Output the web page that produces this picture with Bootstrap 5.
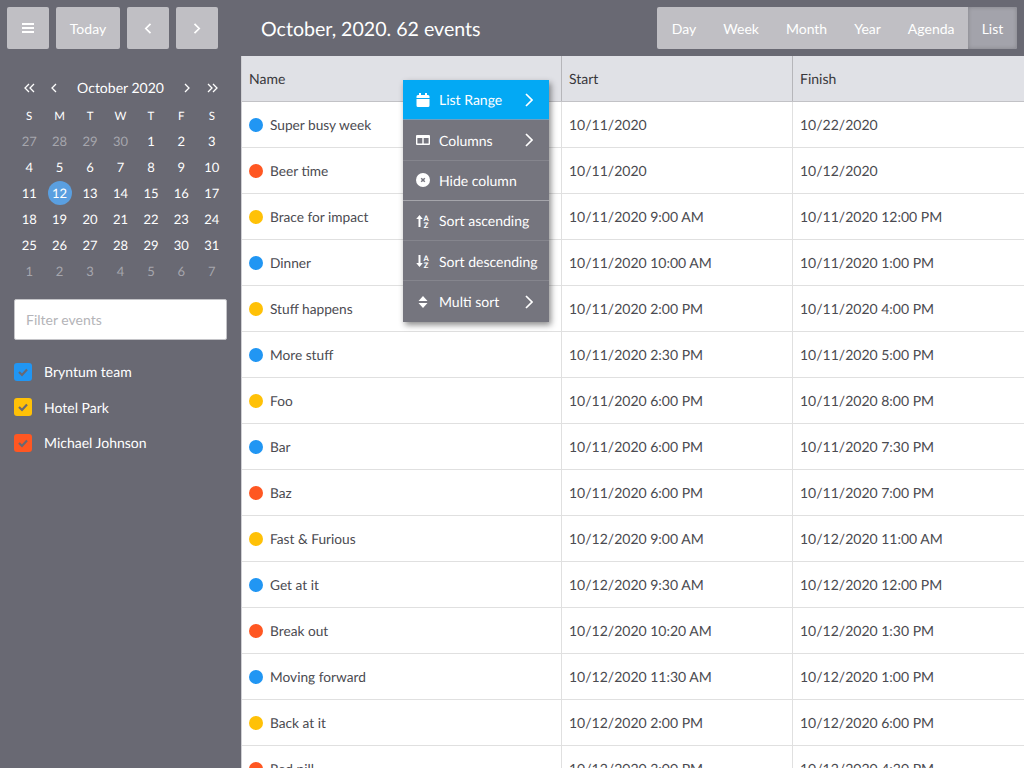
<!DOCTYPE html>
<html lang="en">
<head>
    <meta charset="UTF-8">
    <title>Calendar list view</title>
    <link href="https://cdn.jsdelivr.net/npm/bootstrap@5.3.2/dist/css/bootstrap.min.css" rel="stylesheet">
    <style>
        html, body { height: 100%; overflow: hidden; }
        body { font-family: Lato, "Liberation Sans", sans-serif; font-size: 14px; background: #fff; color: #4a4a50; text-rendering: geometricPrecision; }

        .app-shell { position: relative; width: 1024px; height: 768px; overflow: hidden; }
        .top-bar { height: 56px; padding: 7px; background: #696973; gap: 7px; flex: none; }
        .bar-btn { height: 42px; min-width: 42px; padding: 0; border: 0; border-radius: 2px; background: #c0bfc4; color: #fff; font-size: 14px; }
        .btn-today { width: 64px; }
        .bar-title { margin-left: 36px; padding-top: 3px; color: #fff; font-size: 19.6px; }
        .view-group { height: 42px; border-radius: 2px; background: #c0bfc4; }
        .view-btn { height: 42px; border: 0; background: none; color: #fff; font-size: 14px; padding: 0 13.5px; }
        .view-btn:first-child { padding-left: 14.5px; }
        .view-btn.is-on { width: 49px; padding: 0; border-radius: 0 2px 2px 0; background: #a3a3ab; box-shadow: inset 0 0 4px rgba(0,0,0,.2); }

        .side-panel { width: 241px; flex: none; padding: 0 14px; background: #696973; color: #fff; }
        .cal-head { height: 32px; margin-top: 16px; }
        .cal-arrow { width: 20px; display: flex; justify-content: center; }
        .cal-arrow.is-double { width: 30px; }
        .cal-month { font-size: 14px; padding-bottom: 1px; }
        .cal-grid { display: grid; grid-template-columns: repeat(7, 1fr); grid-template-rows: 23px; grid-auto-rows: 26px; margin-top: 1px; font-size: 13px; text-align: center; line-height: 26px; }
        .cal-dow { font-size: 11.5px; line-height: 24px; height: 23px; }
        .cal-off { color: #a6a6ad; }
        .cal-today { width: 24px; height: 24px; margin: 1px auto; line-height: 24px; border-radius: 50%; background: #5a9fe0; }
        .filter-box { height: 41px; margin-top: 15px; padding: 0 11px; border: 1px solid #c4c4c8; border-radius: 2px; background: #fff; font-size: 14px; }
        .filter-box::placeholder { color: #b4b4b8; opacity: 1; }
        .res-list { margin-top: 14px; }
        .res-row { height: 35.5px; gap: 12px; font-size: 14px; }
        .res-check { width: 18px; height: 18px; border-radius: 3px; }

        .grid-area { flex: 1; min-width: 0; border-left: 1px solid #d0d0d4; }
        .grid-head { height: 46px; background: #e0e1e6; border-bottom: 1px solid #c2c2c6; color: #38383c; }
        .grid-row { height: 46px; border-bottom: 1px solid #e0e0e0; color: #4a4a50; }
        .cell-name { width: 320px; flex: none; padding-left: 7px; border-right: 1px solid #e0e0e0; }
        .grid-row .cell-name { font-size: 13.7px; line-height: 21px; }
        .cell-start { width: 231px; flex: none; padding-left: 7px; border-right: 1px solid #e0e0e0; }
        .cell-finish { flex: 1; padding-left: 7px; }
        .grid-head .cell-name, .grid-head .cell-start { border-right-color: #b6b6ba; }
        .ev-dot { width: 14px; height: 14px; margin-right: 7px; border-radius: 50%; flex: none; }
        .c-blue { background: #2196f3; }
        .c-amber { background: #ffc107; }
        .c-red { background: #ff5722; }

        .ctx-menu { position: absolute; left: 403px; top: 80px; width: 146px; background: #75757e; color: #fff; box-shadow: 2px 3px 6px rgba(0,0,0,.45); }
        .ctx-item { height: 40.3px; padding: .4px 16px 0 13px; border-bottom: 1px solid #85858d; font-size: 14px; white-space: nowrap; }
        .ctx-item:last-child { border-bottom: 0; }
        .ctx-item.is-active { background: #03a9f4; border-bottom-color: #6f9fc0; }
        .ctx-item.is-sep { border-bottom-color: #a5a5ab; }
        .ctx-ico { width: 14px; margin-right: 9px; flex: none; }
    </style>
</head>
<body>
<div class="app-shell d-flex flex-column">
    <div class="top-bar d-flex align-items-center">
        <button class="bar-btn d-flex align-items-center justify-content-center">
            <svg width="12" height="12" viewBox="0 0 12 12" fill="#fff"><rect y="1" width="12" height="2"/><rect y="5" width="12" height="2"/><rect y="9" width="12" height="2"/></svg>
        </button>
        <button class="bar-btn btn-today">Today</button>
        <button class="bar-btn d-flex align-items-center justify-content-center">
            <svg width="8" height="11" viewBox="0 0 8 11" fill="none" stroke="#fff" stroke-width="1.7"><path d="M6.500 .8 1.800 5.500l4.700 4.700"/></svg>
        </button>
        <button class="bar-btn d-flex align-items-center justify-content-center">
            <svg width="8" height="11" viewBox="0 0 8 11" fill="none" stroke="#fff" stroke-width="1.7"><path d="M1.500 .8l4.700 4.700-4.700 4.700"/></svg>
        </button>
        <div class="bar-title">October, 2020. 62 events</div>
        <div class="view-group d-flex ms-auto">
            <button class="view-btn">Day</button>
            <button class="view-btn">Week</button>
            <button class="view-btn">Month</button>
            <button class="view-btn">Year</button>
            <button class="view-btn">Agenda</button>
            <button class="view-btn is-on">List</button>
        </div>
    </div>
    <div class="d-flex flex-grow-1" style="min-height:0">
        <div class="side-panel">
            <div class="cal-head d-flex align-items-center">
                <span class="cal-arrow is-double"><svg width="11" height="10" viewBox="0 0 11 10" fill="none" stroke="#fff" stroke-width="1.3"><path d="M5 1 1 5l4 4M10 1 6 5l4 4"/></svg></span>
                <span class="cal-arrow"><svg width="6" height="10" viewBox="0 0 6 10" fill="none" stroke="#fff" stroke-width="1.3"><path d="M5 1 1 5l4 4"/></svg></span>
                <span class="cal-month flex-grow-1 text-center">October 2020</span>
                <span class="cal-arrow"><svg width="6" height="10" viewBox="0 0 6 10" fill="none" stroke="#fff" stroke-width="1.3"><path d="M1 1l4 4-4 4"/></svg></span>
                <span class="cal-arrow is-double"><svg width="11" height="10" viewBox="0 0 11 10" fill="none" stroke="#fff" stroke-width="1.3"><path d="M1 1l4 4-4 4M6 1l4 4-4 4"/></svg></span>
            </div>
            <div class="cal-grid" id="calGrid"></div>
            <input class="filter-box form-control shadow-none" placeholder="Filter events">
            <div class="res-list">
                <div class="res-row d-flex align-items-center"><svg class="res-check c-blue" viewBox="0 0 18 18" fill="none" stroke="#696973" stroke-width="2.2"><path d="M5 9l3 3 5-5.500"/></svg>Bryntum team</div>
                <div class="res-row d-flex align-items-center"><svg class="res-check c-amber" viewBox="0 0 18 18" fill="none" stroke="#696973" stroke-width="2.2"><path d="M5 9l3 3 5-5.500"/></svg>Hotel Park</div>
                <div class="res-row d-flex align-items-center"><svg class="res-check c-red" viewBox="0 0 18 18" fill="none" stroke="#696973" stroke-width="2.2"><path d="M5 9l3 3 5-5.500"/></svg>Michael Johnson</div>
            </div>
        </div>
        <div class="grid-area">
            <div class="grid-head d-flex">
                <div class="cell-name d-flex align-items-center">Name</div>
                <div class="cell-start d-flex align-items-center">Start</div>
                <div class="cell-finish d-flex align-items-center">Finish</div>
            </div>
            <div id="gridBody"></div>
        </div>
    </div>

    <div class="ctx-menu">
        <div class="ctx-item is-active d-flex align-items-center">
            <svg class="ctx-ico" height="14" viewBox="0 0 14 14" fill="#fff"><path d="M3 0h2v2h4V0h2v2h1A1.500 1.500 0 0 1 13.500 3.500V5H.5V3.500A1.500 1.500 0 0 1 2 2h1zM.5 6h13v6.500A1.500 1.500 0 0 1 12 14H2A1.500 1.500 0 0 1 .5 12.500z"/></svg>
            <span class="flex-grow-1">List Range</span>
            <svg width="8" height="14" viewBox="0 0 8 14" fill="none" stroke="#fff" stroke-width="1.700"><path d="M1 1l6 6-6 6"/></svg>
        </div>
        <div class="ctx-item d-flex align-items-center">
            <svg class="ctx-ico" height="10" viewBox="0 0 14 10" fill="#fff"><path fill-rule="evenodd" d="M1 0h12a1 1 0 0 1 1 1v8a1 1 0 0 1-1 1H1a1 1 0 0 1-1-1V1a1 1 0 0 1 1-1zM1.400 3v5.600h4.900V3zM7.700 3v5.600h4.900V3z"/></svg>
            <span class="flex-grow-1">Columns</span>
            <svg width="8" height="14" viewBox="0 0 8 14" fill="none" stroke="#fff" stroke-width="1.700"><path d="M1 1l6 6-6 6"/></svg>
        </div>
        <div class="ctx-item is-sep d-flex align-items-center">
            <svg class="ctx-ico" height="14" viewBox="0 0 14 14"><circle cx="7" cy="7" r="7" fill="#fff"/><path d="M5.200 5.200l3.600 3.600M8.800 5.200l-3.600 3.600" stroke="#75757e" stroke-width="1.500"/></svg>
            <span>Hide column</span>
        </div>
        <div class="ctx-item d-flex align-items-center">
            <svg class="ctx-ico" height="14" viewBox="0 0 14 14" fill="#fff"><path d="M3.500 1 .2 5h2.300v8h2V5h2.300z"/><text x="7.500" y="6.500" font-size="7.500" font-weight="900" font-family="Lato">A</text><text x="7.800" y="13.500" font-size="7.500" font-weight="900" font-family="Lato">Z</text></svg>
            <span>Sort ascending</span>
        </div>
        <div class="ctx-item d-flex align-items-center">
            <svg class="ctx-ico" height="14" viewBox="0 0 14 14" fill="#fff"><path d="M3.500 13 .2 9h2.300V1h2v8h2.300z"/><text x="7.500" y="6.500" font-size="7.500" font-weight="900" font-family="Lato">A</text><text x="7.800" y="13.500" font-size="7.500" font-weight="900" font-family="Lato">Z</text></svg>
            <span>Sort descending</span>
        </div>
        <div class="ctx-item d-flex align-items-center">
            <svg class="ctx-ico" height="14" viewBox="0 0 14 14" fill="#fff"><path d="M7 1l4.500 5h-9zM7 13l4.500-5h-9z"/></svg>
            <span class="flex-grow-1">Multi sort</span>
            <svg width="8" height="14" viewBox="0 0 8 14" fill="none" stroke="#fff" stroke-width="1.700"><path d="M1 1l6 6-6 6"/></svg>
        </div>
    </div>
</div>

<script src="https://cdn.jsdelivr.net/npm/bootstrap@5.3.2/dist/js/bootstrap.bundle.min.js"></script>
<script>
    // mini calendar
    const calGrid = document.getElementById('calGrid');
    let calHtml = ['S','M','T','W','T','F','S'].map(d => `<div class="cal-dow">${d}</div>`).join('');
    const days = [27,28,29,30].map(d => [d, 'cal-off']);
    for (let d = 1; d <= 31; d++) days.push([d, d === 12 ? 'cal-today' : '']);
    for (let d = 1; d <= 7; d++) days.push([d, 'cal-off']);
    calHtml += days.map(d => `<div class="${d[1]}">${d[0]}</div>`).join('');
    calGrid.innerHTML = calHtml;

    // event rows
    const events = [
        ['c-blue','Super busy week','10/11/2020','10/22/2020'],
        ['c-red','Beer time','10/11/2020','10/12/2020'],
        ['c-amber','Brace for impact','10/11/2020 9:00 AM','10/11/2020 12:00 PM'],
        ['c-blue','Dinner','10/11/2020 10:00 AM','10/11/2020 1:00 PM'],
        ['c-amber','Stuff happens','10/11/2020 2:00 PM','10/11/2020 4:00 PM'],
        ['c-blue','More stuff','10/11/2020 2:30 PM','10/11/2020 5:00 PM'],
        ['c-amber','Foo','10/11/2020 6:00 PM','10/11/2020 8:00 PM'],
        ['c-blue','Bar','10/11/2020 6:00 PM','10/11/2020 7:30 PM'],
        ['c-red','Baz','10/11/2020 6:00 PM','10/11/2020 7:00 PM'],
        ['c-amber','Fast & Furious','10/12/2020 9:00 AM','10/12/2020 11:00 AM'],
        ['c-blue','Get at it','10/12/2020 9:30 AM','10/12/2020 12:00 PM'],
        ['c-red','Break out','10/12/2020 10:20 AM','10/12/2020 1:30 PM'],
        ['c-blue','Moving forward','10/12/2020 11:30 AM','10/12/2020 1:00 PM'],
        ['c-amber','Back at it','10/12/2020 2:00 PM','10/12/2020 6:00 PM'],
        ['c-red','Red pill','10/12/2020 3:00 PM','10/12/2020 4:30 PM']
    ];
    document.getElementById('gridBody').innerHTML = events.map(e => `
        <div class="grid-row d-flex">
            <div class="cell-name d-flex align-items-center"><span class="ev-dot ${e[0]}"></span>${e[1].replace('&', '&amp;')}</div>
            <div class="cell-start d-flex align-items-center">${e[2]}</div>
            <div class="cell-finish d-flex align-items-center">${e[3]}</div>
        </div>`).join('');
</script>
</body>
</html>
